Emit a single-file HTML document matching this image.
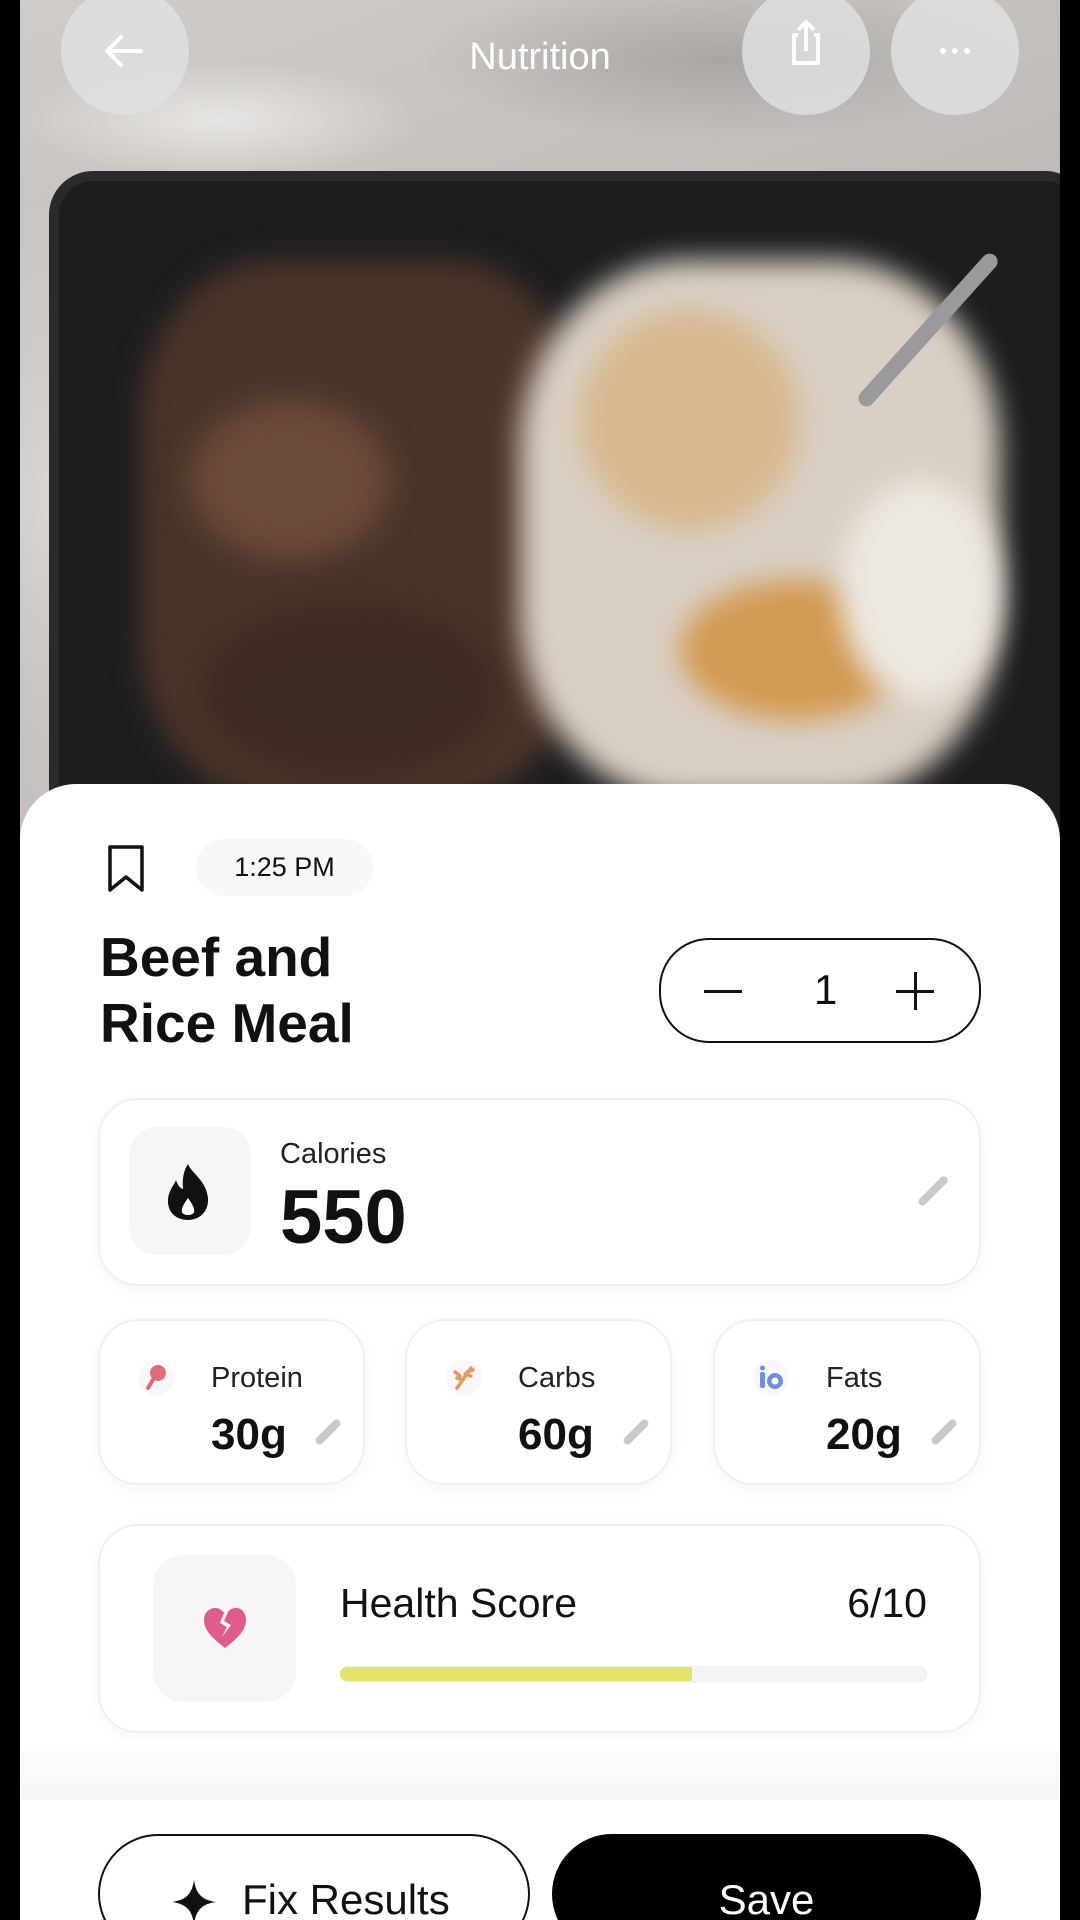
<!DOCTYPE html>
<html><head><meta charset="utf-8"><style>
*{margin:0;padding:0;box-sizing:border-box}
html,body{background:#000;width:1080px;height:1920px;overflow:hidden}
#wrap{width:1080px;height:1920px;background:#000;position:relative;overflow:hidden;font-family:"Liberation Sans",sans-serif;color:#111}
.abs{position:absolute}
#photo{left:20px;top:0;width:1040px;height:840px;background:
radial-gradient(ellipse 200px 60px at 200px 120px,#e8e6e4,transparent),
radial-gradient(ellipse 300px 80px at 700px 60px,#a9a6a3,transparent),
radial-gradient(ellipse 120px 300px at 30px 500px,#d9d6d3,transparent),
linear-gradient(160deg,#cfccc9,#bdb9b6 50%,#d6d3d0);overflow:hidden}
#tray{left:29px;top:171px;width:1040px;height:700px;border-radius:44px;background:#1d1d1f;border:10px solid #2a2a2c}
.blob{position:absolute;border-radius:50%;filter:blur(14px)}
.circ{width:128px;height:128px;border-radius:50%;background:rgba(225,225,225,.82);top:-13px}
#sheet{left:20px;top:784px;width:1040px;height:1136px;background:#fff;border-radius:56px 56px 0 0}
.card{position:absolute;background:#fff;border:2px solid #f0f0f2;border-radius:40px;box-shadow:0 4px 16px rgba(0,0,0,.04)}
.ibox{position:absolute;background:#f6f6f9;border-radius:28px}
.pencil{position:absolute;width:8px;height:38px;background:#c9c9c9;border-radius:4px;transform:rotate(45deg)}
.lbl{position:absolute;font-size:29px;color:#222}
.val{position:absolute;font-size:44px;font-weight:bold}
</style></head><body><div id="wrap">
<div id="photo" class="abs">
 <div id="tray" class="abs"></div>
 <div class="blob" style="left:120px;top:260px;width:440px;height:540px;background:#4a3429;border-radius:30%"></div>
 <div class="blob" style="left:170px;top:400px;width:200px;height:160px;background:#6a4a38"></div>
 <div class="blob" style="left:180px;top:600px;width:300px;height:180px;background:#3e2b22"></div>
 <div class="blob" style="left:500px;top:260px;width:480px;height:540px;background:#d9d0c4;border-radius:35%"></div>
 <div class="blob" style="left:560px;top:310px;width:220px;height:220px;background:#d7b88e"></div>
 <div class="blob" style="left:660px;top:580px;width:230px;height:140px;background:#d29a52"></div>
 <div class="blob" style="left:820px;top:480px;width:160px;height:220px;background:#ece8e2"></div>
 <div class="abs" style="left:900px;top:230px;width:16px;height:200px;background:#9a9a9c;transform:rotate(42deg);border-radius:8px"></div>
</div>
<div class="abs circ" style="left:61px"><svg width="128" height="128" viewBox="0 0 128 128"><path d="M80 64H48M60 50L46 64L60 78" stroke="#fff" stroke-width="4" fill="none" stroke-linecap="round" stroke-linejoin="round"/></svg></div>
<div class="abs" style="left:340px;top:36px;width:400px;text-align:center;font-size:38px;color:#fff">Nutrition</div>
<div class="abs circ" style="left:742px"><svg width="128" height="128" viewBox="0 0 128 128"><path d="M56 48H52V76H76V48H72M64 64V36M56 43L64 35L72 43" stroke="#fff" stroke-width="4" fill="none" stroke-linejoin="round"/></svg></div>
<div class="abs circ" style="left:891px"><svg width="128" height="128" viewBox="0 0 128 128"><circle cx="52" cy="64" r="3" fill="#fff"/><circle cx="64" cy="64" r="3" fill="#fff"/><circle cx="76" cy="64" r="3" fill="#fff"/></svg></div>

<div id="sheet" class="abs"></div>
<svg class="abs" style="left:106px;top:844px" width="40" height="50" viewBox="0 0 40 50"><path d="M4 3H36V46L20 33L4 46Z" stroke="#111" stroke-width="3.5" fill="none" stroke-linejoin="round"/></svg>
<div class="abs" style="left:196px;top:839px;width:177px;height:57px;background:#f8f8fa;border-radius:28px;text-align:center;line-height:57px;font-size:27px">1:25 PM</div>
<div class="abs" style="left:100px;top:924px;font-size:55px;font-weight:bold;line-height:66px">Beef and<br>Rice Meal</div>
<div class="abs" style="left:659px;top:938px;width:322px;height:105px;border:2.5px solid #111;border-radius:50px"></div>
<div class="abs" style="left:704px;top:990px;width:38px;height:3px;background:#111"></div>
<div class="abs" style="left:814px;top:966px;font-size:42px">1</div>
<div class="abs" style="left:896px;top:990px;width:38px;height:3px;background:#111"></div>
<div class="abs" style="left:914px;top:972px;width:3px;height:38px;background:#111"></div>

<div class="card" style="left:98px;top:1098px;width:883px;height:188px"></div>
<div class="ibox" style="left:129px;top:1127px;width:122px;height:128px"></div>
<svg class="abs" style="left:162px;top:1162px" width="52" height="60" viewBox="0 0 52 60"><path d="M26 2C30 12 44 18 46 36C47 50 37 58 26 58C14 58 5 50 6 37C7 28 12 23 14 18C16 24 18 26 21 27C20 16 22 8 26 2Z" fill="#111"/><path d="M26 36C30 42 33 46 32 50C31 54 21 54 20 50C19 46 22 42 26 36Z" fill="#fff"/></svg>
<div class="lbl" style="left:280px;top:1138px">Calories</div>
<div class="abs" style="left:280px;top:1174px;font-size:76px;font-weight:bold">550</div>
<div class="pencil" style="left:929px;top:1172px"></div>

<div class="card" style="left:98px;top:1319px;width:267px;height:166px"></div>
<div class="card" style="left:405px;top:1319px;width:267px;height:166px"></div>
<div class="card" style="left:713px;top:1319px;width:268px;height:166px"></div>
<div class="abs" style="left:138px;top:1360px;width:36px;height:36px;border-radius:50%;background:#f8f8fa"></div>
<div class="abs" style="left:446px;top:1360px;width:36px;height:36px;border-radius:50%;background:#f8f8fa"></div>
<div class="abs" style="left:753px;top:1360px;width:36px;height:36px;border-radius:50%;background:#f8f8fa"></div>
<svg class="abs" style="left:143px;top:1364px" width="26" height="28" viewBox="0 0 26 28"><ellipse cx="15" cy="9" rx="8" ry="8" fill="#e06a77"/><path d="M11 14L5 24" stroke="#e06a77" stroke-width="4" stroke-linecap="round"/></svg>
<svg class="abs" style="left:451px;top:1364px" width="26" height="28" viewBox="0 0 26 28"><path d="M6 24L20 4M9 12L4 8M12 16L6 14M14 10L20 12M16 8L22 6" stroke="#e69a5a" stroke-width="3.5" stroke-linecap="round"/></svg>
<svg class="abs" style="left:758px;top:1364px" width="28" height="28" viewBox="0 0 28 28"><rect x="2" y="8" width="5" height="16" rx="2" fill="#6f8fe0"/><circle cx="4.5" cy="4" r="2.5" fill="#6f8fe0"/><circle cx="17" cy="17" r="8" fill="#6f8fe0"/><circle cx="17" cy="17" r="3.5" fill="#fff"/></svg>
<div class="lbl" style="left:211px;top:1362px">Protein</div>
<div class="lbl" style="left:518px;top:1362px">Carbs</div>
<div class="lbl" style="left:826px;top:1362px">Fats</div>
<div class="val" style="left:211px;top:1410px">30g</div>
<div class="val" style="left:518px;top:1410px">60g</div>
<div class="val" style="left:826px;top:1410px">20g</div>
<div class="pencil" style="left:324px;top:1416px;height:32px"></div>
<div class="pencil" style="left:632px;top:1416px;height:32px"></div>
<div class="pencil" style="left:940px;top:1416px;height:32px"></div>

<div class="card" style="left:98px;top:1524px;width:883px;height:209px"></div>
<div class="ibox" style="left:153px;top:1555px;width:143px;height:147px;border-radius:30px"></div>
<svg class="abs" style="left:202px;top:1606px" width="46" height="44" viewBox="0 0 46 44"><path d="M23 42C10 32 2 24 2 14C2 6 8 2 13 2C17 2 20 4 22 7L18 17L25 21L20 31L29 19L22 15L26 6C28 3 31 2 34 2C40 2 44 7 44 14C44 24 36 32 23 42Z" fill="#de5d8c"/></svg>
<div class="abs" style="left:340px;top:1580px;font-size:41px">Health Score</div>
<div class="abs" style="left:807px;top:1580px;width:120px;text-align:right;font-size:41px">6/10</div>
<div class="abs" style="left:340px;top:1666px;width:587px;height:16px;border-radius:8px;background:#f4f4f4;border:1px solid #eee"></div>
<div class="abs" style="left:340px;top:1667px;width:352px;height:14px;border-radius:7px 0 0 7px;background:#e3e36a"></div>

<div class="abs" style="left:20px;top:1740px;width:1040px;height:60px;background:linear-gradient(#fff,#f6f6f8)"></div>
<div class="abs" style="left:98px;top:1834px;width:432px;height:120px;border:2.5px solid #111;border-radius:60px"></div>
<svg class="abs" style="left:170px;top:1878px" width="48" height="48" viewBox="0 0 48 48"><path d="M24 2C26 16 32 22 46 24C32 26 26 32 24 46C22 32 16 26 2 24C16 22 22 16 24 2Z" fill="#111"/></svg>
<div class="abs" style="left:242px;top:1876px;font-size:42px">Fix Results</div>
<div class="abs" style="left:552px;top:1834px;width:429px;height:120px;background:#000;border-radius:60px"></div>
<div class="abs" style="left:552px;top:1876px;width:429px;text-align:center;font-size:42px;color:#fff">Save</div>
</div></body></html>
